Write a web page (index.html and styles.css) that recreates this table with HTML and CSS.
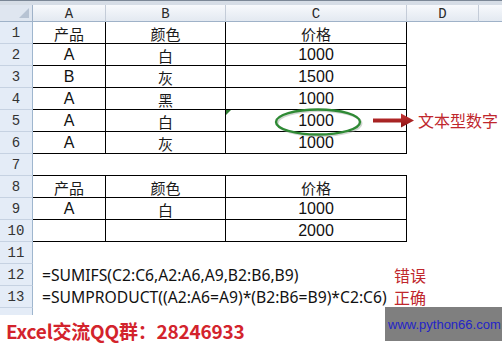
FILE: index.html
```html
<!DOCTYPE html>
<html lang="zh">
<head>
<meta charset="utf-8">
<title>SUMIFS 文本型数字</title>
<link rel="stylesheet" href="styles.css">
</head>
<body>
<div class="page">
  <div class="sheet">
    <div class="strip"></div>

    <div class="hd corner"></div>
    <div class="hd">A</div>
    <div class="hd">B</div>
    <div class="hd">C</div>
    <div class="hd">D</div>
    <div class="hd last"></div>

    <div class="rh">1</div>
    <div class="c b zh">产品</div><div class="c b zh">颜色</div><div class="c b zh">价格</div><div class="c"></div><div class="c"></div>

    <div class="rh">2</div>
    <div class="c b">A</div><div class="c b zh">白</div><div class="c b">1000</div><div class="c"></div><div class="c"></div>

    <div class="rh">3</div>
    <div class="c b">B</div><div class="c b zh">灰</div><div class="c b">1500</div><div class="c"></div><div class="c"></div>

    <div class="rh">4</div>
    <div class="c b">A</div><div class="c b zh">黑</div><div class="c b">1000</div><div class="c"></div><div class="c"></div>

    <div class="rh">5</div>
    <div class="c b">A</div><div class="c b zh">白</div><div class="c b flag">1000</div><div class="c"></div><div class="c"></div>

    <div class="rh">6</div>
    <div class="c b">A</div><div class="c b zh">灰</div><div class="c b">1000</div><div class="c"></div><div class="c"></div>

    <div class="rh">7</div>
    <div class="c u"></div><div class="c u"></div><div class="c u"></div><div class="c"></div><div class="c"></div>

    <div class="rh">8</div>
    <div class="c b zh">产品</div><div class="c b zh">颜色</div><div class="c b zh">价格</div><div class="c"></div><div class="c"></div>

    <div class="rh">9</div>
    <div class="c b">A</div><div class="c b zh">白</div><div class="c b">1000</div><div class="c"></div><div class="c"></div>

    <div class="rh">10</div>
    <div class="c b"></div><div class="c b"></div><div class="c b">2000</div><div class="c"></div><div class="c"></div>

    <div class="rh">11</div>
    <div class="c"></div><div class="c"></div><div class="c"></div><div class="c"></div><div class="c"></div>

    <div class="rh">12</div>
    <div class="c fx"><span class="formula">=SUMIFS(C2:C6,A2:A6,A9,B2:B6,B9)</span><span class="note">错误</span></div>

    <div class="rh">13</div>
    <div class="c fx"><span class="formula">=SUMPRODUCT((A2:A6=A9)*(B2:B6=B9)*C2:C6)</span><span class="note">正确</span></div>

    <div class="rh partial"></div>
    <div class="c span5"></div>
  </div>

  <div class="footer">Excel交流QQ群：28246933</div>

  <svg class="ring" width="92" height="32" viewBox="0 0 92 32">
    <ellipse cx="45" cy="15" rx="42" ry="12.5" fill="none" stroke="#9aa59a" stroke-width="2" opacity="0.45" transform="translate(1.5 1.5)"/>
    <ellipse cx="45" cy="15" rx="42" ry="12.5" fill="none" stroke="#2f8a35" stroke-width="2.4"/>
  </svg>

  <svg class="arrow" width="44" height="18" viewBox="0 0 44 18">
    <defs>
      <linearGradient id="ag" x1="0" y1="0" x2="0" y2="1">
        <stop offset="0" stop-color="#c63434"/>
        <stop offset="1" stop-color="#8e1414"/>
      </linearGradient>
    </defs>
    <path d="M1 6.5 H29 V1.5 L42 8.5 L29 15.5 V10.5 H1 Z" fill="url(#ag)"/>
  </svg>

  <div class="callout">文本型数字</div>

  <div class="site">www.python66.com</div>
</div>
</body>
</html>
```

FILE: styles.css
```css
* { box-sizing: border-box; }

html, body {
  margin: 0;
  padding: 0;
  background: #ffffff;
}

.page {
  position: relative;
  width: 502px;
  height: 346px;
  overflow: hidden;
  font-family: "Liberation Sans", "Noto Sans CJK SC", sans-serif;
  color: #111111;
}

.sheet {
  display: grid;
  grid-template-columns: 33px 73px 120px 181px 72px 23px;
  grid-template-rows: 5px 17px repeat(13, 22px) 7px;
}

.strip {
  grid-column: 1 / 7;
  background: #d6dde6;
  border-top: 1px solid #7b8796;
}

.hd {
  display: flex;
  align-items: center;
  justify-content: center;
  background: linear-gradient(#f7f9fc, #e3e9f1);
  border-right: 1px solid #c4ccd8;
  border-bottom: 1px solid #9fb2c8;
  font-family: "Liberation Mono", monospace;
  font-size: 14px;
  color: #2a2a2a;
  padding-top: 1px;
}

.hd.corner {
  position: relative;
  background: #dfe6f0;
  border-right: 1px solid #9fb2c8;
}

.hd.corner::after {
  content: "";
  position: absolute;
  right: 3px;
  bottom: 3px;
  border-left: 10px solid transparent;
  border-bottom: 10px solid #b7c3d3;
}

.hd.last { border-right: none; }

.rh {
  display: flex;
  align-items: center;
  justify-content: center;
  background: #e4ecf7;
  border-right: 1px solid #9fb6ce;
  border-bottom: 1px solid #c6d2e2;
  font-family: "Liberation Mono", monospace;
  font-size: 14px;
  color: #333333;
  overflow: hidden;
}

.rh.partial { border-bottom: none; }

.c {
  display: flex;
  align-items: center;
  justify-content: center;
  font-size: 16px;
  color: #111111;
  overflow: hidden;
}

.c.b {
  border-right: 1px solid #000000;
  border-bottom: 1px solid #000000;
}

.c.u { border-bottom: 1px solid #000000; }

.c.zh {
  font-family: "Noto Sans CJK SC", sans-serif;
  font-size: 15px;
  color: #1a1a1a;
  padding-top: 1px;
}

.c.flag { position: relative; }

.c.flag::before {
  content: "";
  position: absolute;
  left: 0;
  top: 0;
  border-top: 5px solid #2f7d32;
  border-right: 5px solid transparent;
}

.c.fx {
  grid-column: 2 / 7;
  justify-content: flex-start;
  padding-left: 9px;
}

.span5 { grid-column: 2 / 7; }

.formula {
  width: 352px;
  font-family: "Noto Sans", "Liberation Sans", sans-serif;
  font-size: 15.7px;
  white-space: nowrap;
  color: #111111;
}

.note {
  font-family: "Noto Sans CJK SC", sans-serif;
  font-size: 16px;
  color: #c0272d;
}

.footer {
  height: 31px;
  padding-left: 6px;
  background: #ffffff;
  font-family: "Noto Sans CJK SC", sans-serif;
  font-weight: 700;
  font-size: 19px;
  letter-spacing: -0.2px;
  line-height: 31px;
  color: #d3232c;
  white-space: nowrap;
}

.ring {
  position: absolute;
  left: 273px;
  top: 107px;
}

.arrow {
  position: absolute;
  left: 372px;
  top: 112px;
}

.callout {
  position: absolute;
  left: 418px;
  top: 108px;
  font-family: "Noto Sans CJK SC", sans-serif;
  font-size: 16px;
  color: #c0272d;
  white-space: nowrap;
}

.site {
  position: absolute;
  left: 385px;
  top: 307px;
  width: 117px;
  height: 34px;
  background: #7f7f7f;
  display: flex;
  align-items: center;
  padding-left: 3px;
  font-family: "Liberation Sans", sans-serif;
  font-size: 13px;
  color: #2424c8;
  white-space: nowrap;
}
```
